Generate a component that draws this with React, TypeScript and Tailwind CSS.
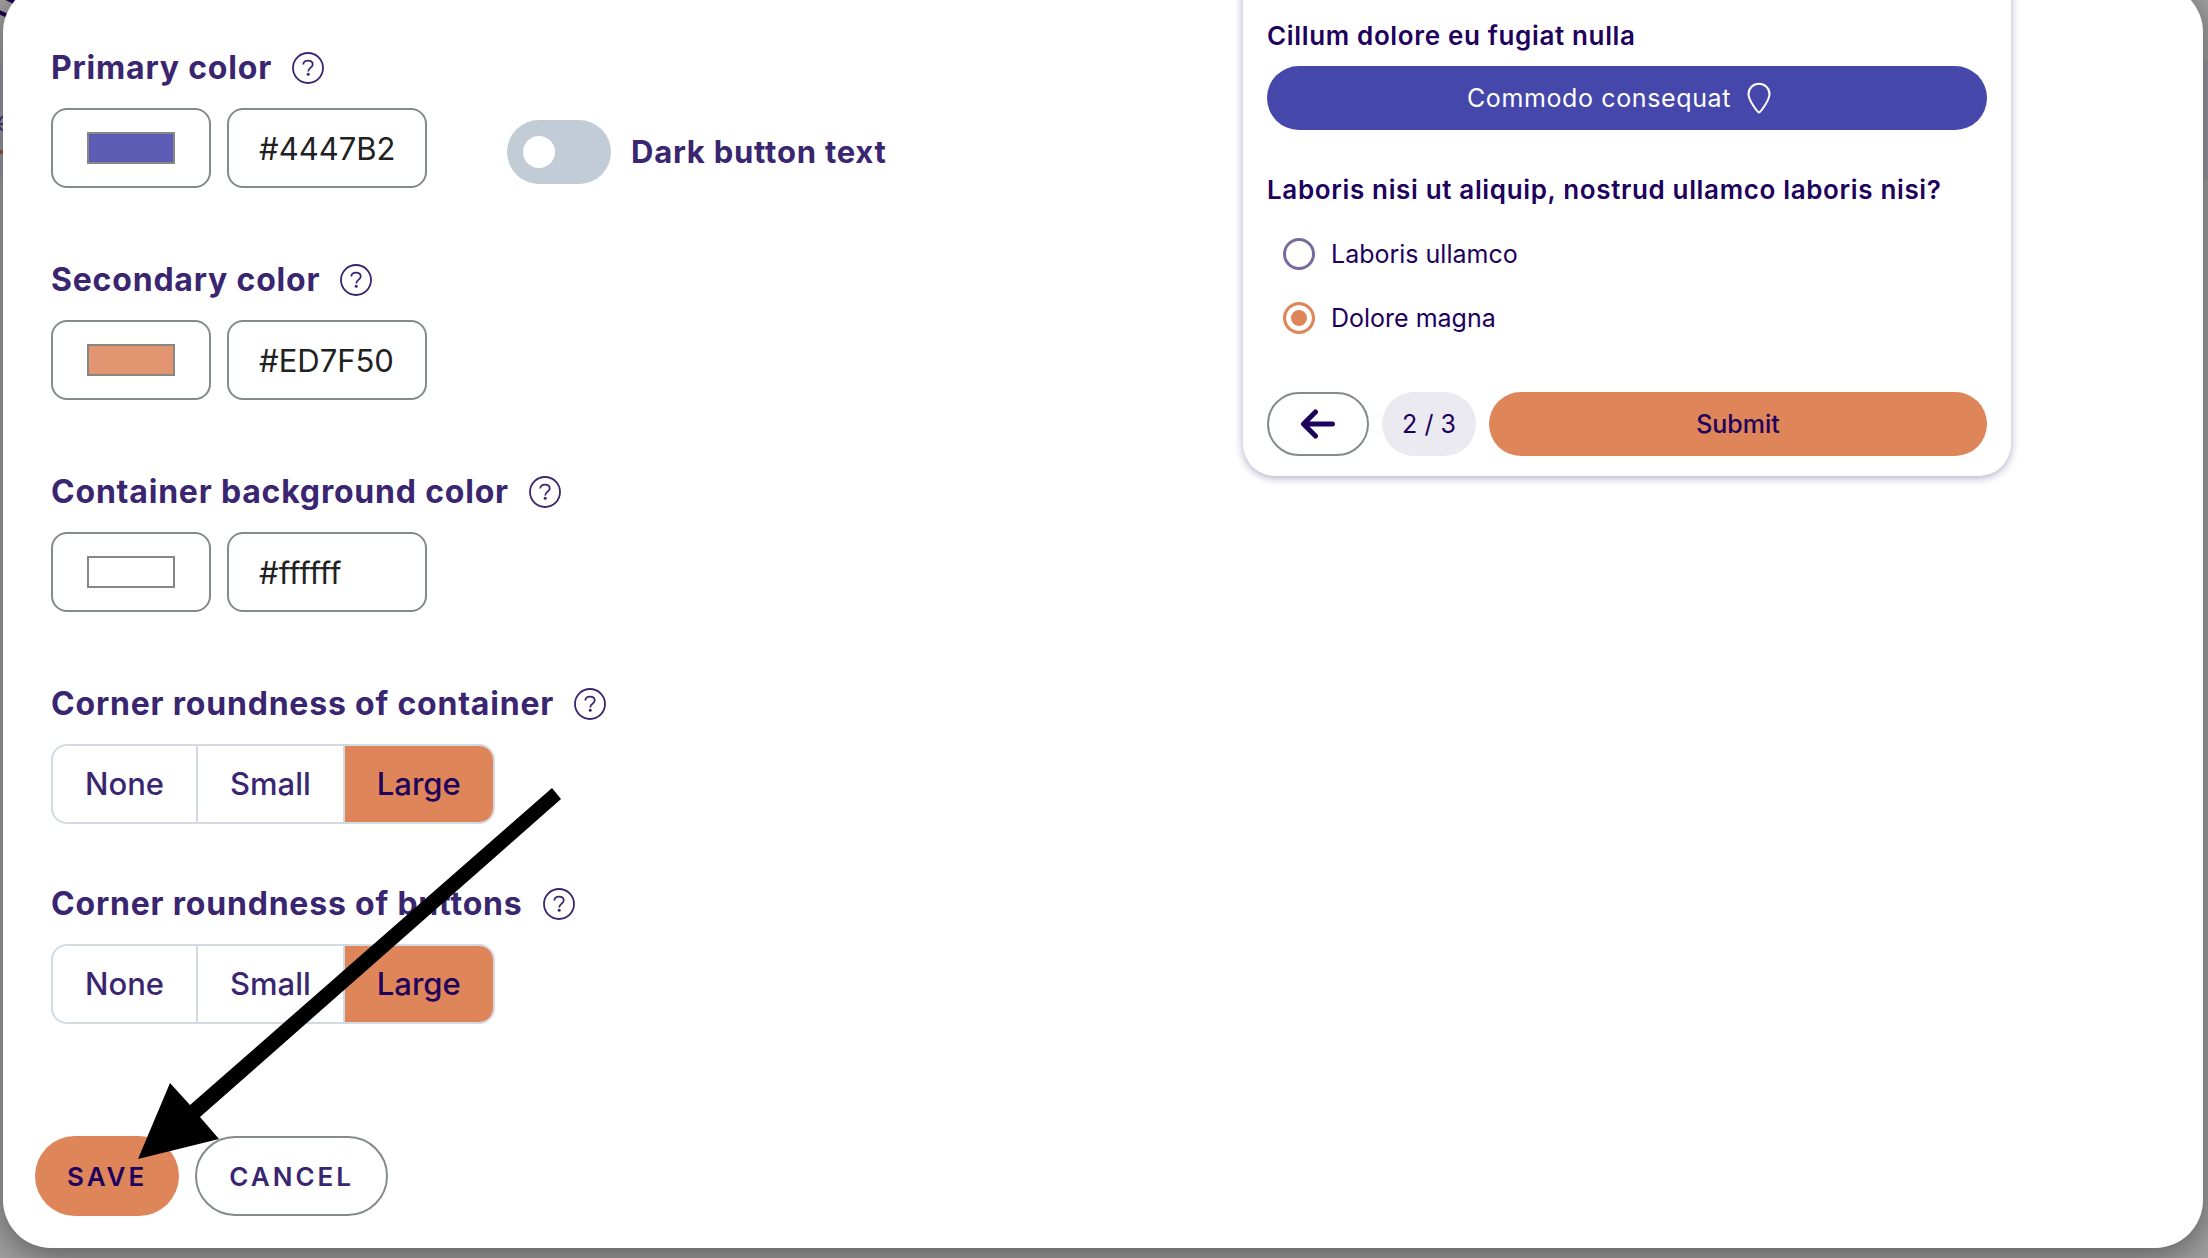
import { useState } from "react";

const SIZES = ["None", "Small", "Large"];

function HelpIcon({ label }: { label: string }) {
  return (
    <button type="button" aria-label={`Help: ${label}`} className="size-8 flex-shrink-0">
      <svg viewBox="0 0 32 32" fill="none" stroke="currentColor" strokeWidth="1.8" className="size-8">
        <circle cx="16" cy="16" r="15" />
        <path d="M11.300 12.600c0-2.300 1.800-3.900 4.700-3.900s4.700 1.500 4.700 3.700c0 3.200-4.500 3.400-4.500 7.200" />
        <circle cx="16.2" cy="22.200" r="1.500" fill="currentColor" stroke="none" />
      </svg>
    </button>
  );
}

function FieldLabel({ id, label }: { id: string; label: string }) {
  return (
    <div className="mb-6 flex h-8 items-center gap-5">
      <label htmlFor={id} id={`${id}-label`} className="text-[32px] leading-8 font-bold tracking-wide whitespace-nowrap">
        {label}
      </label>
      <HelpIcon label={label} />
    </div>
  );
}

interface ColorFieldProps {
  id: string;
  label: string;
  hex: string;
  swatch: string;
  children?: React.ReactNode;
}

function ColorField({ id, label, hex, swatch, children }: ColorFieldProps) {
  const [text, setText] = useState(hex);
  const [color, setColor] = useState(swatch);

  return (
    <div>
      <FieldLabel id={id} label={label} />
      <div className="flex gap-4">
        <div className="flex h-20 w-40 items-center justify-center rounded-2xl border-2 border-[#848b89]">
          <input
            type="color"
            aria-label={`${label} picker`}
            value={color}
            onChange={(e) => {
              setColor(e.target.value);
              setText(e.target.value);
            }}
            className="h-8 w-[88px] appearance-none p-0 [&::-webkit-color-swatch]:rounded-none [&::-webkit-color-swatch]:border-2 [&::-webkit-color-swatch]:border-[#868886] [&::-webkit-color-swatch-wrapper]:p-0"
          />
        </div>
        <input
          id={id}
          type="text"
          value={text}
          onChange={(e) => setText(e.target.value)}
          className="h-20 w-[200px] rounded-2xl border-2 border-[#848b89] pr-2 pl-[30px] text-[31px] text-[#212121]"
        />
        {children}
      </div>
    </div>
  );
}

function RoundnessField({ id, label }: { id: string; label: string }) {
  const [value, setValue] = useState("Large");

  return (
    <div>
      <FieldLabel id={id} label={label} />
      <div
        role="group"
        aria-labelledby={`${id}-label`}
        className="flex h-20 w-fit divide-x-2 divide-[#d3dae3] overflow-hidden rounded-2xl border-2 border-[#d3dae3]"
      >
        {SIZES.map((size, i) => (
          <button
            key={size}
            id={i === 0 ? id : undefined}
            type="button"
            aria-pressed={value === size}
            onClick={() => setValue(size)}
            className="px-8 text-[31px] font-medium aria-pressed:bg-[#de855a] aria-pressed:text-[#1e005d]"
          >
            {size}
          </button>
        ))}
      </div>
    </div>
  );
}

function Preview() {
  return (
    <div className="w-[768px] rounded-b-[32px] px-6 pt-9 pb-5 text-[25px] leading-9 text-[#1e005d] shadow-[0_2px_8px_rgba(30,0,93,0.35)]">
      <h3 className="text-[26px] leading-8 font-semibold tracking-wide">Cillum dolore eu fugiat nulla</h3>
      <button type="button" className="mt-[14px] flex h-16 w-full items-center justify-center gap-4 rounded-full bg-[#4547ab] pr-4 tracking-wide text-white">
        Commodo consequat
        <svg viewBox="0 0 24 32" fill="none" stroke="currentColor" strokeWidth="2" className="h-8 w-6">
          <path d="M12 30.500C10.500 30 1.500 18.500 1.500 12a10.500 10.200 0 0 1 21 0C22.500 18.500 13.500 30 12 30.500z" strokeLinejoin="round" />
        </svg>
      </button>

      <h3 className="mt-11 text-[26px] leading-8 font-semibold tracking-wide">
        Laboris nisi ut aliquip, nostrud ullamco laboris nisi?
      </h3>
      <div className="mt-4 px-4">
        {["Laboris ullamco", "Dolore magna"].map((option) => (
          <label key={option} className="flex h-16 items-center gap-4">
            <input
              type="radio"
              name="preview"
              defaultChecked={option === "Dolore magna"}
              className="size-8 appearance-none rounded-full border-[3px] border-[#776a9e] checked:border-[#de855a] checked:bg-[#de855a] checked:shadow-[inset_0_0_0_5px_white]"
            />
            {option}
          </label>
        ))}
      </div>

      <div className="mt-[42px] flex h-16 gap-[13px]">
        <button type="button" aria-label="Back" className="flex w-[102px] items-center justify-center rounded-full border-2 border-[#848b89]">
          <svg viewBox="0 0 36 30" fill="none" stroke="currentColor" strokeWidth="5" strokeLinecap="round" strokeLinejoin="round" className="h-[30px] w-9">
            <path d="M32.5 15H4M15.500 3L3.500 15l12 12" />
          </svg>
        </button>
        <span className="flex w-[94px] items-center justify-center rounded-full bg-[#ebeaf0]">2 / 3</span>
        <button type="button" className="flex-1 rounded-full bg-[#de855a] font-medium">
          Submit
        </button>
      </div>
    </div>
  );
}

export default function App() {
  const [dark, setDark] = useState(false);

  return (
    <div className="relative min-h-screen overflow-hidden bg-[#a2a2a2] pr-[5px] pb-[10px] pl-[3px] font-[Inter,sans-serif]">
      {/* Page behind the dialog */}
      <div className="absolute inset-x-0 top-[60px] h-[120px] bg-[#9c9da3]" />
      <svg viewBox="0 0 20 160" className="absolute top-0 left-0 h-40 w-5">
        <path d="M6 -2l10 5M-1 12l9 4" stroke="#1e0050" strokeWidth="4" />
        <path d="M8 116c-7-1-9 4-9 8s3 8 9 7M0 124h6" stroke="#3f3a86" strokeWidth="2" fill="none" />
        <path d="M0 152h8" stroke="#9a5a3b" strokeWidth="4" />
      </svg>

      <div role="dialog" aria-label="Appearance" className="relative -mt-4 rounded-[48px] bg-white pb-8 text-[#3a2670] shadow-[0_8px_36px_rgba(0,0,0,0.45)]">
        <form onSubmit={(e) => e.preventDefault()}>
          <div className="grid grid-cols-2 px-12">
            <div className="flex flex-col pt-[68px]">
              <div className="flex flex-col gap-[76px]">
                <ColorField id="primary" label="Primary color" hex="#4447B2" swatch="#5c5cb5">
                  <label className="ml-16 flex items-center gap-5 self-end pb-1 text-[31px] leading-8 font-bold tracking-wide whitespace-nowrap">
                    <input
                      type="checkbox"
                      role="switch"
                      checked={dark}
                      onChange={(e) => setDark(e.target.checked)}
                      className="h-16 w-[104px] appearance-none rounded-full bg-[#c2ccd6] p-4 before:block before:size-8 before:rounded-full before:bg-white checked:bg-[#de855a] checked:before:ml-10"
                    />
                    Dark button text
                  </label>
                </ColorField>
                <ColorField id="secondary" label="Secondary color" hex="#ED7F50" swatch="#e29570" />
                <ColorField id="background" label="Container background color" hex="#ffffff" swatch="#ffffff" />
                <RoundnessField id="container-roundness" label="Corner roundness of container" />
              </div>
              <div className="mt-16">
                <RoundnessField id="button-roundness" label="Corner roundness of buttons" />
              </div>
            </div>

            <div className="flex items-start justify-center pr-1">
              <Preview />
            </div>
          </div>

          <div className="mt-28 flex gap-4 px-8 text-[26px] font-semibold tracking-[3px]">
            <button type="submit" className="h-20 rounded-full bg-[#de855a] px-8 text-[#1e005d]">
              SAVE
            </button>
            <button type="button" className="h-20 rounded-full border-2 border-[#848b89] px-8">
              CANCEL
            </button>
          </div>
        </form>
      </div>

      {/* Pointer to the save button */}
      <svg viewBox="0 0 423 371" className="pointer-events-none absolute top-[788px] left-[138px] h-[371px] w-[423px]">
        <path d="M0 371L32 295l20 22L414 0l9 11L62 329l19 22z" />
      </svg>
    </div>
  );
}
